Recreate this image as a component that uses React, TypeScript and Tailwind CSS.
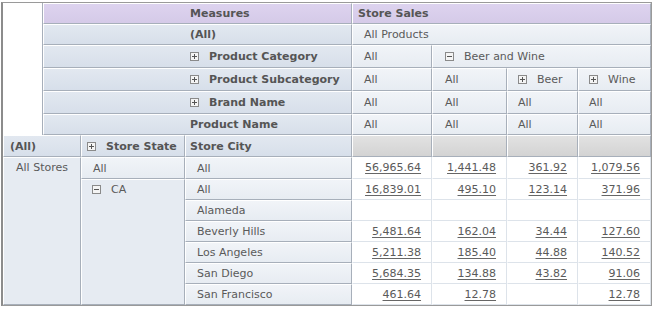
import React from "react";

const font = "font-['DejaVu_Sans','Verdana',sans-serif]";

// cell edges: white top/left highlight, grey bottom/right
const edge =
  "border-t border-l border-b border-r border-t-white border-l-white border-b-[#a7afba] border-r-[#a7afba]";
const purple = `bg-linear-to-b from-[#ddd3ef] to-[#d5cae8] ${edge}`;
const label = `bg-linear-to-b from-[#e2e8f0] to-[#d7dfea] ${edge}`;
const value = `bg-linear-to-b from-[#f1f4f8] to-[#e7ecf2] ${edge}`;
const gray = `bg-linear-to-b from-[#e2e2e2] to-[#d3d3d3] ${edge}`;
const side = `bg-[#e6ebf2] ${edge}`;
const data =
  "bg-white border-b border-r border-b-[#dde3ea] border-r-[#dde3ea] border-l border-l-white";

function Toggle({ open = false }: { open?: boolean }) {
  return (
    <svg width="9" height="9" viewBox="0 0 9 9" className="inline-block mr-[10px] align-[-1px]">
      <rect x="0.5" y="0.5" width="8" height="8" fill="#f4f4f4" stroke="#8a8a8a" />
      <path d="M2 4.5h5" stroke="#555" />
      {!open && <path d="M4.5 2v5" stroke="#555" />}
    </svg>
  );
}

function Num({ v }: { v?: string }) {
  return (
    <td className={`${data} text-right pr-[10px]`}>
      {v && <span className="underline underline-offset-2 decoration-[#666]">{v}</span>}
    </td>
  );
}

const rows: { city: string; vals: (string | undefined)[] }[] = [
  { city: "All", vals: ["16,839.01", "495.10", "123.14", "371.96"] },
  { city: "Alameda", vals: [undefined, undefined, undefined, undefined] },
  { city: "Beverly Hills", vals: ["5,481.64", "162.04", "34.44", "127.60"] },
  { city: "Los Angeles", vals: ["5,211.38", "185.40", "44.88", "140.52"] },
  { city: "San Diego", vals: ["5,684.35", "134.88", "43.82", "91.06"] },
  { city: "San Francisco", vals: ["461.64", "12.78", undefined, "12.78"] },
];

const lab = `${label} pl-[146px] font-bold text-[#555]`;

export default function App() {
  return (
    <div className={`w-[656px] h-[310px] bg-white pt-[2px] pl-[1px] ${font} text-[11px] leading-[13px] text-[#5a5a5a] whitespace-nowrap`}>
      <table className="table-fixed border-separate border-spacing-0 w-[651px] border border-[#9a9a9a] border-l-2 border-l-[#8c8c8c]">
        <colgroup>
          <col className="w-[40px]" />
          <col className="w-[38px]" />
          <col className="w-[104px]" />
          <col className="w-[167px]" />
          <col className="w-[80px]" />
          <col className="w-[75px]" />
          <col className="w-[71px]" />
          <col className="w-[73px]" />
        </colgroup>
        <tbody>
          <tr className="h-[21px]">
            <td rowSpan={6} className="bg-white border-r border-r-[#a7afba]" />
            <td colSpan={3} className={`${purple} pl-[146px] font-bold text-[#555]`}>Measures</td>
            <td colSpan={4} className={`${purple} pl-[5px] font-bold text-[#555]`}>Store Sales</td>
          </tr>
          <tr className="h-[21px]">
            <td colSpan={3} className={lab}>(All)</td>
            <td colSpan={4} className={`${value} pl-[11px]`}>All Products</td>
          </tr>
          <tr className="h-[23px]">
            <td colSpan={3} className={lab}>
              <Toggle />Product Category
            </td>
            <td className={`${value} pl-[11px]`}>All</td>
            <td colSpan={3} className={`${value} pl-[12px]`}>
              <Toggle open />Beer and Wine
            </td>
          </tr>
          <tr className="h-[23px]">
            <td colSpan={3} className={lab}>
              <Toggle />Product Subcategory
            </td>
            <td className={`${value} pl-[11px]`}>All</td>
            <td className={`${value} pl-[12px]`}>All</td>
            <td className={`${value} pl-[10px]`}>
              <Toggle />Beer
            </td>
            <td className={`${value} pl-[10px]`}>
              <Toggle />Wine
            </td>
          </tr>
          <tr className="h-[23px]">
            <td colSpan={3} className={lab}>
              <Toggle />Brand Name
            </td>
            <td className={`${value} pl-[11px]`}>All</td>
            <td className={`${value} pl-[12px]`}>All</td>
            <td className={`${value} pl-[10px]`}>All</td>
            <td className={`${value} pl-[10px]`}>All</td>
          </tr>
          <tr className="h-[21px]">
            <td colSpan={3} className={lab}>Product Name</td>
            <td className={`${value} pl-[11px]`}>All</td>
            <td className={`${value} pl-[12px]`}>All</td>
            <td className={`${value} pl-[10px]`}>All</td>
            <td className={`${value} pl-[10px]`}>All</td>
          </tr>
          <tr className="h-[22px]">
            <td colSpan={2} className={`${label} pl-[6px] font-bold text-[#555]`}>(All)</td>
            <td className={`${label} pl-[5px] font-bold text-[#555]`}>
              <Toggle />Store State
            </td>
            <td className={`${label} pl-[4px] font-bold text-[#555]`}>Store City</td>
            <td className={gray} />
            <td className={gray} />
            <td className={gray} />
            <td className={gray} />
          </tr>
          <tr className="h-[22px]">
            <td colSpan={2} rowSpan={7} className={`${side} align-top text-center pt-[3px]`}>All Stores</td>
            <td className={`${value} pl-[11px]`}>All</td>
            <td className={`${value} pl-[11px]`}>All</td>
            <Num v="56,965.64" />
            <Num v="1,441.48" />
            <Num v="361.92" />
            <Num v="1,079.56" />
          </tr>
          {rows.map((r, i) => (
            <tr key={r.city + i} className="h-[21px]">
              {i === 0 && (
                <td rowSpan={6} className={`${side} align-top pl-[10px] pt-[3px]`}>
                  <Toggle open />CA
                </td>
              )}
              <td className={`${value} pl-[11px]`}>{r.city}</td>
              {r.vals.map((v, j) => (
                <Num key={j} v={v} />
              ))}
            </tr>
          ))}
        </tbody>
      </table>
    </div>
  );
}
